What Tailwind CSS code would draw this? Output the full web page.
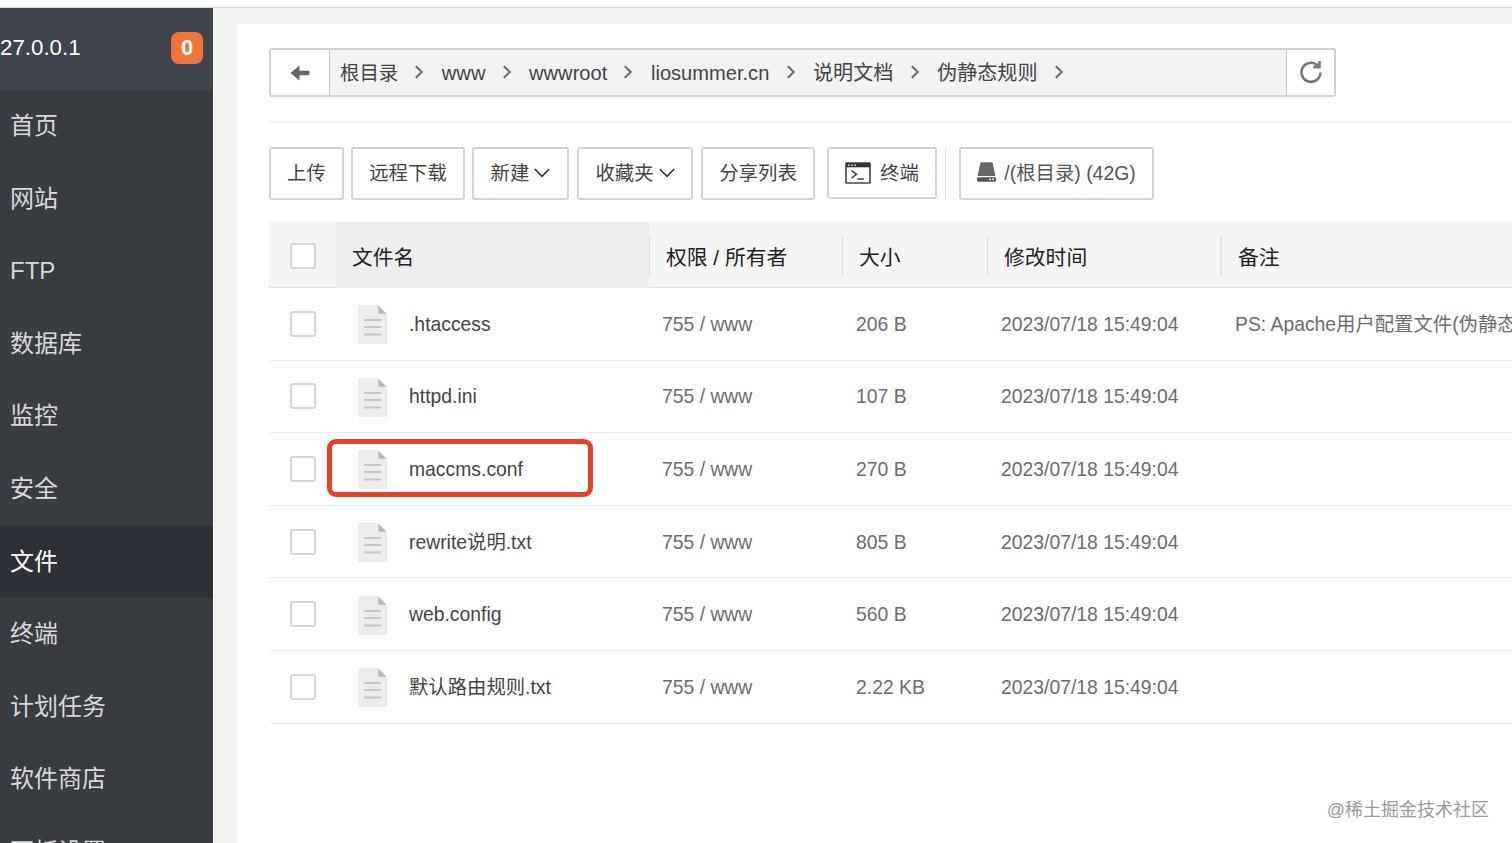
<!DOCTYPE html>
<html lang="zh-CN">
<head>
  <meta charset="UTF-8" />
  <meta name="viewport" content="width=device-width, initial-scale=1.0"/>
  <title>文件</title>
  <script src="https://cdn.jsdelivr.net/npm/@tailwindcss/browser@4"></script>
  <style>
    body {
      font-family: 'Liberation Sans', 'Noto Sans CJK SC', sans-serif;
    }
  </style>
</head>
<body class="h-[843px] overflow-hidden bg-white text-[#444]">
  <svg class="hidden">
    <symbol id="icon-right" viewBox="0 0 10 14">
      <path d="M1.8 1.3 L7.8 7 L1.8 12.7" fill="none" stroke="#6c6c6c" stroke-width="2"/>
    </symbol>
    <symbol id="icon-down" viewBox="0 0 16 10">
      <path d="M0.8 1 L8 8.4 L15.2 1" fill="none" stroke="#333" stroke-width="1.6"/>
    </symbol>
    <symbol id="icon-file" viewBox="0 0 29 39">
      <path d="M1.5 0 H20 L29 9 V37.5 Q29 39 27.5 39 H1.5 Q0 39 0 37.5 V1.5 Q0 0 1.5 0Z" fill="#ececec"/>
      <path d="M20.3 0.5 L28.5 8.8 H20.3Z" fill="#b9b9b9"/>
      <path d="M6 15 H23 M6 22 H23 M6 29.5 H23" stroke="#c6c6c6" stroke-width="1.9"/>
    </symbol>
  </svg>

  <div class="h-2 border-b border-[#d5d6d8] bg-white"></div>
  <div class="flex h-[835px] bg-[#f1f2f2]">

    <!-- Menu -->
    <aside class="w-[213px] shrink-0 overflow-hidden bg-[#393d41] text-[24px] text-[#d6d8da]">
      <div class="flex h-[82px] items-start justify-between bg-[#40444c] pt-6 pr-[10px] text-white">
        <span class="text-[22.3px] leading-8">27.0.0.1</span>
        <span class="h-8 w-8 rounded-lg bg-[#ee7538] text-center text-[22px] leading-8 font-bold">0</span>
      </div>
      <nav id="menu"></nav>
    </aside>

    <main class="mt-4 ml-6 min-w-0 flex-1 overflow-hidden bg-white pl-8">
      <!-- Path -->
      <div class="mt-6 flex h-[49px] w-[1067px] rounded-[3px] border-2 border-[#cfcfcf] bg-[#f2f2f2]">
        <div class="flex w-[59px] shrink-0 items-center justify-center border-r border-[#c4c4c4] bg-white">
          <svg class="h-4 w-5" viewBox="0 0 20 16"><path d="M0.5 8 L9.5 0.5 V5.7 H18 Q19.5 5.7 19.5 7 V9 Q19.5 10.3 18 10.3 H9.5 V15.5Z" fill="#666"/></svg>
        </div>
        <div id="path" class="flex h-[45px] flex-1 items-center pt-0.5 pl-[10px] text-[20.1px] leading-[45px] whitespace-nowrap"></div>
        <div class="flex w-12 shrink-0 items-center justify-center border-l border-[#c4c4c4] bg-white">
          <svg class="mb-0.5 h-6 w-6" viewBox="0 0 24 24">
            <path d="M18.3 5.2 A9.5 9.5 0 1 0 21.5 12.5" fill="none" stroke="#777" stroke-width="2.6"/>
            <path d="M21.8 1 V8.4 H14.2 V6 L17.5 5 L19.3 3 V1Z" fill="#777"/>
          </svg>
        </div>
      </div>

      <!-- Toolbar -->
      <div class="mt-6 flex border-t-2 border-[#f0f0f0] pt-6 text-[19.4px] leading-[49px] whitespace-nowrap">
        <button class="h-[53px] w-[75px] shrink-0 rounded-[3px] border-2 border-[#d3d3d3]">上传</button>
        <button class="ml-[7px] h-[53px] w-[114px] shrink-0 rounded-[3px] border-2 border-[#d3d3d3]">远程下载</button>
        <button class="ml-[7px] flex h-[53px] w-[97px] shrink-0 items-center justify-center gap-[5px] rounded-[3px] border-2 border-[#d3d3d3]">新建<svg class="mb-0.5 h-[10px] w-4"><use href="#icon-down"/></svg></button>
        <button class="ml-2 flex h-[53px] w-[116px] shrink-0 items-center justify-center gap-[5px] rounded-[3px] border-2 border-[#d3d3d3]">收藏夹<svg class="mb-0.5 h-[10px] w-4"><use href="#icon-down"/></svg></button>
        <button class="ml-2 h-[53px] w-[114px] shrink-0 rounded-[3px] border-2 border-[#d3d3d3]">分享列表</button>
        <button class="ml-3 flex h-[52px] w-[110px] shrink-0 items-center justify-center gap-[9px] rounded-[3px] border-2 border-[#d3d3d3]">
          <svg class="h-[22px] w-[26px]" viewBox="0 0 26 22">
            <rect x="1" y="1" width="24" height="20" rx="0.5" fill="none" stroke="#444" stroke-width="1.6"/>
            <path d="M1 1 H25 V5.3 H1Z" fill="#333"/>
            <path d="M3 3.1 H4.6 M6.2 3.1 H7.8 M9.4 3.1 H11" stroke="#fff" stroke-width="1.3"/>
            <path d="M6.5 8.5 L11.5 12.3 L6.5 16.2 M12.5 17 H19" fill="none" stroke="#444" stroke-width="1.5"/>
          </svg>终端
        </button>
        <span class="ml-2 h-[53px] w-px shrink-0 bg-[#e3e3e3]"></span>
        <button class="ml-[13px] flex h-[53px] w-[195px] shrink-0 items-center justify-center gap-2 rounded-[3px] border-2 border-[#d3d3d3] text-[#555]">
          <svg class="mb-[3px] h-5 w-[19px]" viewBox="0 0 19 20">
            <path d="M4.3 0.3 H14.7 Q15.5 0.3 15.7 1.2 L18.4 14 H0.6 L3.3 1.2 Q3.5 0.3 4.3 0.3Z" fill="#666"/>
            <rect y="15.2" width="19" height="4.5" rx="1.3" fill="#555"/>
            <path d="M12.3 16.5 H14 V18.2 H12.3Z M15.3 16.5 H17 V18.2 H15.3Z" fill="#fff"/>
          </svg>/(根目录) (42G)
        </button>
      </div>

      <!-- Files -->
      <div class="mt-[22px] flex h-[66px] w-[1300px] items-start border-b border-[#dfdfdf] bg-[#f5f5f5] text-[20.8px] text-[#222]">
        <div class="w-[67px] shrink-0 pt-[21px] pl-[21px]"><div class="h-[26px] w-[26px] rounded-[3px] border-2 border-[#d5d5d5] bg-white"></div></div>
        <div class="h-[66px] w-[313px] shrink-0 bg-[#eee] pl-4 leading-[72px]">文件名</div>
        <div class="mt-[14px] h-10 w-[193px] shrink-0 border-l border-[#ddd] pl-4 leading-[44px]">权限 / 所有者</div>
        <div class="mt-[14px] h-10 w-[145px] shrink-0 border-l border-[#ddd] pl-4 leading-[44px]">大小</div>
        <div class="mt-[14px] h-10 w-[233px] shrink-0 border-l border-[#ddd] pl-4 leading-[44px]">修改时间</div>
        <div class="mt-[14px] h-10 flex-1 border-l-2 border-[#e4e4e4] pl-4 leading-[44px]">备注</div>
      </div>
      <div id="files" class="w-[1300px] text-[19.35px] text-[#6c6c6c]"></div>
    </main>
  </div>

  <div class="absolute top-[439px] left-[327px] h-[58px] w-[266px] rounded-[9px] border-[5px] border-[#e94025]"></div>
  <div class="absolute top-[796px] right-[23px] text-[18px] leading-7 text-[#999]">@稀土掘金技术社区</div>

  <script>
    const menu = ['首页', '网站', 'FTP', '数据库', '监控', '安全', '文件', '终端', '计划任务', '软件商店', '面板设置'];
    const path = ['根目录', 'www', 'wwwroot', 'liosummer.cn', '说明文档', '伪静态规则'];
    const files = [
      { name: '.htaccess', size: '206 B', note: 'PS: Apache用户配置文件(伪静态)' },
      { name: 'httpd.ini', size: '107 B', note: '' },
      { name: 'maccms.conf', size: '270 B', note: '' },
      { name: 'rewrite说明.txt', size: '805 B', note: '' },
      { name: 'web.config', size: '560 B', note: '' },
      { name: '默认路由规则.txt', size: '2.22 KB', note: '' }
    ];

    document.getElementById('menu').innerHTML = menu.map(item => `
      <a class="block h-[72.6px] pl-[10px] leading-[72px] ${item === '文件' ? 'bg-[#2d3036] text-white' : ''}">${item}</a>
    `).join('');

    document.getElementById('path').innerHTML = path.map(dir => `
      <span class="first:text-[19.4px]">${dir}</span><svg class="mr-[17.5px] mb-1 ml-[16.2px] h-[14px] w-[10px] shrink-0"><use href="#icon-right"/></svg>
    `).join('');

    document.getElementById('files').innerHTML = files.map(file => `
      <div class="flex h-[72.6px] items-center border-b border-[#ebebeb] leading-[74px] whitespace-nowrap">
        <div class="w-[67px] shrink-0 pl-[21px]"><div class="h-[26px] w-[26px] rounded-[3px] border-2 border-[#d5d5d5] bg-white"></div></div>
        <div class="flex w-[326px] shrink-0 items-center pl-[22px] text-[#444]">
          <svg class="mt-0.5 mr-[22px] h-[39px] w-[29px]"><use href="#icon-file"/></svg>${file.name}
        </div>
        <div class="w-[194px] shrink-0">755 / www</div>
        <div class="w-[145px] shrink-0">${file.size}</div>
        <div class="w-[234px] shrink-0">2023/07/18 15:49:04</div>
        <div>${file.note}</div>
      </div>
    `).join('');
  </script>
</body>
</html>
